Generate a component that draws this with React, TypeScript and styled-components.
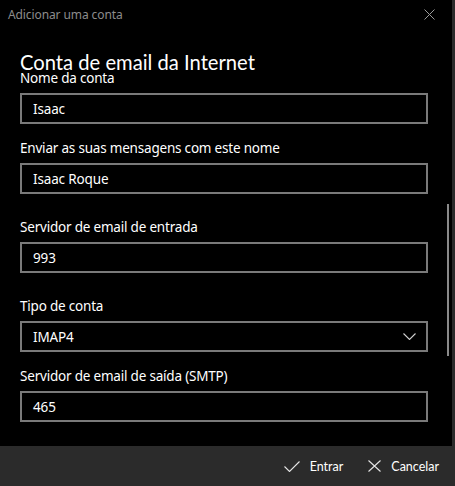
import React from "react";
import styled, { createGlobalStyle } from "styled-components";

const Global = createGlobalStyle`
  html, body { margin: 0; padding: 0; background: #000; }
  body { font-family: "Noto Sans", "Open Sans", sans-serif; color: #fff; }
  * { box-sizing: border-box; }
`;

const Screen = styled.div`
  width: 455px;
  height: 486px;
  display: grid;
  grid-template-columns: 452px 3px;
  background: #000;
  overflow: hidden;
`;

const Edge = styled.div`
  background: #2b2b2b;
`;

const Window = styled.div`
  position: relative;
  display: flex;
  flex-direction: column;
  height: 486px;
  background: #000;
`;

const TitleBar = styled.div`
  height: 28px;
  display: flex;
  align-items: center;
  justify-content: space-between;
  padding: 0 17px 0 8px;
`;

const TitleText = styled.span`
  font-size: 12px;
  color: #8c8c8c;
  letter-spacing: -0.1px;
`;

const Content = styled.div`
  flex: 1;
  display: flex;
  flex-direction: column;
  padding: 26px 24px 0 20px;
`;

const Heading = styled.h1`
  margin: 0;
  font-family: Lato, "Noto Sans", sans-serif;
  font-size: 20.2px;
  font-weight: 400;
  line-height: 16px;
`;

const Field = styled.div<{ $gap: number }>`
  display: flex;
  flex-direction: column;
  margin-top: ${(p) => p.$gap}px;
`;

const Label = styled.label`
  font-size: 13.5px;
  line-height: 17px;
  margin-bottom: 6px;
  letter-spacing: -0.2px;
`;

const Box = styled.div`
  height: 31px;
  width: 408px;
  border: 2px solid #7a7a7a;
  display: flex;
  align-items: center;
  justify-content: space-between;
  padding: 0 10px 0 11px;
  font-size: 13.5px;
  letter-spacing: -0.15px;
`;

const Footer = styled.div`
  height: 40px;
  background: #2b2b2b;
  display: flex;
  justify-content: flex-end;
  align-items: center;
  padding-right: 13px;
  gap: 25px;
`;

const Action = styled.button`
  all: unset;
  display: flex;
  align-items: center;
  gap: 10px;
  font-family: Lato, "Noto Sans", sans-serif;
  font-size: 12.5px;
  color: #fff;
`;

const ScrollThumb = styled.div`
  position: absolute;
  right: 3px;
  top: 204px;
  width: 2px;
  height: 152px;
  background: #8a8a8a;
`;

const Close = () => (
  <svg width="11" height="11" viewBox="0 0 11 11">
    <path d="M0.5 0.5 L10.5 10.5 M10.5 0.5 L0.5 10.5" stroke="#9a9a9a" strokeWidth="1" />
  </svg>
);

const Chevron = () => (
  <svg width="13" height="7" viewBox="0 0 13 7">
    <path d="M0.5 0.5 L6.5 6.5 L12.5 0.5" stroke="#d0d0d0" strokeWidth="1.1" fill="none" />
  </svg>
);

const Check = () => (
  <svg width="16" height="11" viewBox="0 0 16 11">
    <path d="M0.5 5.5 L5.5 10.5 L15.5 0.5" stroke="#e6e6e6" strokeWidth="1.1" fill="none" />
  </svg>
);

const Cross = () => (
  <svg width="13" height="12" viewBox="0 0 13 12">
    <path d="M0.5 0.5 L12.5 11.5 M12.5 0.5 L0.5 11.5" stroke="#e6e6e6" strokeWidth="1.1" fill="none" />
  </svg>
);

const fields = [
  { label: "Nome da conta", value: "Isaac", gap: 0 },
  { label: "Enviar as suas mensagens com este nome", value: "Isaac Roque", gap: 16 },
  { label: "Servidor de email de entrada", value: "993", gap: 25 },
  { label: "Tipo de conta", value: "IMAP4", gap: 25, select: true },
  { label: "Servidor de email de saída (SMTP)", value: "465", gap: 16 },
];

export default function App() {
  return (
    <>
      <Global />
      <Screen>
        <Window>
          <TitleBar>
            <TitleText>Adicionar uma conta</TitleText>
            <Close />
          </TitleBar>
          <Content>
            <Heading>Conta de email da Internet</Heading>
            {fields.map((f) => (
              <Field key={f.label} $gap={f.gap}>
                <Label>{f.label}</Label>
                <Box>
                  <span>{f.value}</span>
                  {f.select && <Chevron />}
                </Box>
              </Field>
            ))}
          </Content>
          <Footer>
            <Action>
              <Check />
              Entrar
            </Action>
            <Action>
              <Cross />
              Cancelar
            </Action>
          </Footer>
          <ScrollThumb />
        </Window>
        <Edge />
      </Screen>
    </>
  );
}
